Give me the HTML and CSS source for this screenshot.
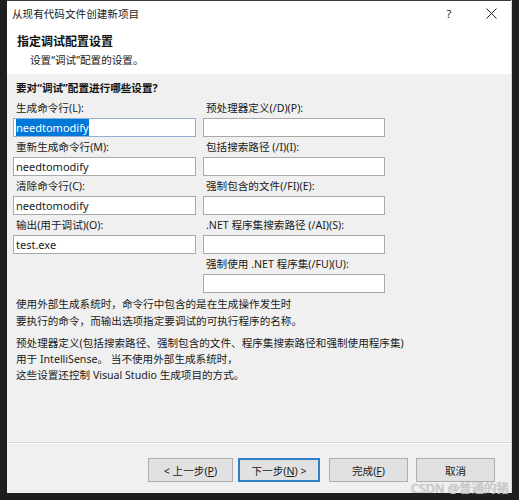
FILE: index.html
```html
<!DOCTYPE html>
<html lang="zh-CN">
<head>
<meta charset="utf-8">
<title>从现有代码文件创建新项目</title>
<link rel="stylesheet" href="styles.css">
</head>
<body>
<div class="dialog">
  <div class="titlebar">
    <span class="title">从现有代码文件创建新项目</span>
    <div class="controls">
      <span class="help">?</span>
      <svg class="close" width="11" height="11" viewBox="0 0 11 11"><path d="M0.5 0.5 L10.5 10.5 M10.5 0.5 L0.5 10.5" stroke="#222" stroke-width="1" fill="none"/></svg>
    </div>
  </div>
  <div class="header">
    <div class="h-title">指定调试配置设置</div>
    <div class="h-sub">设置“调试”配置的设置。</div>
  </div>
  <div class="body">
    <div class="question">要对“调试”配置进行哪些设置?</div>
    <div class="grid">
      <div class="field">
        <div class="label">生成命令行(L):</div>
        <div class="input focused"><span class="sel">needtomodify</span></div>
      </div>
      <div class="field">
        <div class="label">预处理器定义(/D)(P):</div>
        <div class="input"></div>
      </div>
      <div class="field">
        <div class="label">重新生成命令行(M):</div>
        <div class="input">needtomodify</div>
      </div>
      <div class="field">
        <div class="label">包括搜索路径 (/I)(I):</div>
        <div class="input"></div>
      </div>
      <div class="field">
        <div class="label">清除命令行(C):</div>
        <div class="input">needtomodify</div>
      </div>
      <div class="field">
        <div class="label">强制包含的文件(/FI)(E):</div>
        <div class="input"></div>
      </div>
      <div class="field">
        <div class="label">输出(用于调试)(O):</div>
        <div class="input">test.exe</div>
      </div>
      <div class="field">
        <div class="label">.NET 程序集搜索路径 (/AI)(S):</div>
        <div class="input"></div>
      </div>
      <div class="field empty"></div>
      <div class="field">
        <div class="label">强制使用 .NET 程序集(/FU)(U):</div>
        <div class="input"></div>
      </div>
    </div>
    <p class="p1">使用外部生成系统时，命令行中包含的是在生成操作发生时<br>要执行的命令，而输出选项指定要调试的可执行程序的名称。</p>
    <p class="p2">预处理器定义(包括搜索路径、强制包含的文件、程序集搜索路径和强制使用程序集)<br>用于 IntelliSense。 当不使用外部生成系统时，<br>这些设置还控制 Visual Studio 生成项目的方式。</p>
  </div>
  <div class="footer">
    <button class="btn back">&lt; 上一步(<u>P</u>)</button>
    <button class="btn next">下一步(<u>N</u>) &gt;</button>
    <button class="btn done">完成(<u>F</u>)</button>
    <button class="btn cancel">取消</button>
  </div>
</div>
<div class="watermark">CSDN @普通的猪</div>
</body>
</html>
```
FILE: styles.css
```css
html, body {
  margin: 0;
  padding: 0;
}
body {
  background: #1e1e1e;
  width: 519px;
  height: 500px;
  overflow: hidden;
  position: relative;
  font-family: "Noto Sans", "Noto Sans CJK SC", sans-serif;
  font-size: 10.6px;
  color: #1a1a1a;
}
.dialog {
  margin-left: 7px;
  width: 505px;
  height: 493px;
  background: #f0f0f0;
  display: flex;
  flex-direction: column;
  box-sizing: border-box;
  border-right: 1px solid #d4d4d4;
}
.titlebar {
  height: 28px;
  background: #fff;
  display: flex;
  align-items: center;
  justify-content: space-between;
  padding-left: 5px;
  border-top: 1px solid #3a3a3a;
  box-sizing: border-box;
}
.title {
  font-size: 10.6px;
  line-height: 16px;
  margin-top: -2px;
}
.controls {
  display: flex;
  align-items: center;
  margin-top: -2px;
}
.help {
  font-size: 11px;
  width: 10px;
  text-align: center;
  margin-right: 32px;
  color: #222;
}
.close {
  margin-right: 14px;
  display: block;
}
.header {
  height: 46px;
  background: #fff;
  box-sizing: border-box;
  padding-top: 5px;
}
.h-title {
  font-weight: bold;
  font-size: 12px;
  line-height: 18px;
  padding-left: 10px;
  color: #111;
}
.h-sub {
  line-height: 16px;
  padding-left: 23px;
  margin-top: 1px;
}
.body {
  flex: 1;
  padding: 6px 0 0 6px;
  border-bottom: 1px solid #dadada;
  box-shadow: 0 1px 0 #fff;
}
.question {
  font-weight: bold;
  line-height: 16px;
  padding-left: 3px;
  color: #111;
}
.grid {
  margin-top: 4px;
  display: grid;
  grid-template-columns: 183px 182px;
  column-gap: 7px;
}
.field {
  height: 39px;
}
.label {
  line-height: 16px;
  padding-left: 3px;
  white-space: nowrap;
}
.input {
  margin-top: 2px;
  height: 19px;
  box-sizing: border-box;
  background: #fff;
  border: 1px solid #a9a9a9;
  padding-left: 2px;
  line-height: 17px;
  white-space: nowrap;
  font-size: 11px;
}
.input.focused {
  border-color: #8fb0d6;
}
.sel {
  background: #0078d7;
  color: #fff;
  padding: 1px 0;
}
p {
  margin: 0;
  padding-left: 3px;
}
.p1 {
  line-height: 17px;
  margin-top: 1px;
}
.p2 {
  line-height: 16px;
  margin-top: 5px;
}
.footer {
  height: 50px;
  display: flex;
  align-items: flex-start;
  justify-content: flex-end;
  padding: 15px 16px 0 0;
  box-sizing: border-box;
}
.btn {
  height: 24px;
  font-family: "Noto Sans", "Noto Sans CJK SC", sans-serif;
  font-size: 10.6px;
  color: #1a1a1a;
  background: #e1e1e1;
  border: 1px solid #adadad;
  padding: 0;
  margin: 0;
}
.btn u {
  text-underline-offset: 1px;
}
.back { width: 85px; }
.next { width: 82px; margin-left: 5px; border: 2px solid #2f7fc8; }
.done { width: 79px; margin-left: 9px; }
.cancel { width: 79px; margin-left: 8px; }
.watermark {
  position: absolute;
  left: 411px;
  top: 481px;
  font-size: 12.5px;
  line-height: 15px;
  color: rgba(215, 215, 215, 0.85);
  text-shadow: 0 0 1px rgba(90, 90, 90, 0.6);
  white-space: nowrap;
}
```
